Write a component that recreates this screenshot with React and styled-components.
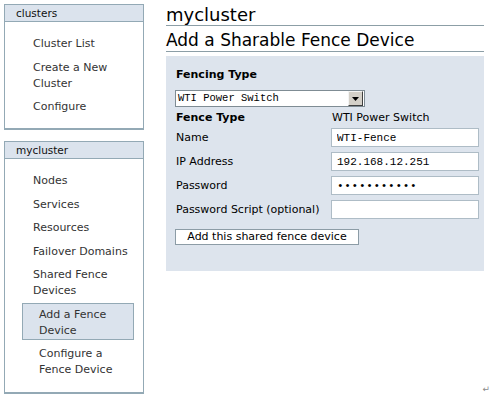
import React from "react"
import styled, { createGlobalStyle } from "styled-components"

const GlobalStyle = createGlobalStyle`
  html, body {
    margin: 0;
    padding: 0;
    background: #ffffff;
  }
  body {
    font-family: "DejaVu Sans", Verdana, sans-serif;
    font-size: 11px;
    color: #000;
  }
`

const Page = styled.div`
  display: flex;
  gap: 22px;
  padding: 4px 8px 4px 4px;
  width: 492px;
  height: 399px;
  box-sizing: border-box;
`

const Sidebar = styled.div`
  width: 140px;
  display: flex;
  flex-direction: column;
  gap: 11px;
  flex-shrink: 0;
`

const NavBox = styled.div`
  border: 1px solid #93a9b5;
  border-bottom-width: 2px;
  background: #fff;
`

const NavHeader = styled.div`
  height: 16px;
  line-height: 16px;
  padding-left: 11px;
  background: #dbe3ed;
  border-bottom: 1px solid #93a9b5;
  font-size: 10.5px;
  color: #111;
`

const NavList = styled.div`
  display: flex;
  flex-direction: column;
  gap: 7.5px;
  padding: 14px 0 13px 28px;
`

const NavItem = styled.div`
  line-height: 16px;
  color: #333;
`

const SubList = styled.div`
  display: flex;
  flex-direction: column;
  gap: 5px;
  margin: 4px 0 0 -11px;
  width: 112px;
`

const SubItem = styled.div`
  line-height: 16px;
  color: #333;
  padding: ${(p) => (p.$active ? "3px" : "0")} 0 0 16px;
  border: 1px solid ${(p) => (p.$active ? "#93a9b5" : "transparent")};
  background: ${(p) => (p.$active ? "#dbe3ed" : "transparent")};
`

const Main = styled.div`
  width: 318px;
  display: flex;
  flex-direction: column;
`

const Title = styled.h1`
  margin: 0;
  font-size: 18px;
  line-height: 21px;
  font-weight: normal;
  border-bottom: 1px solid #8c9ea6;
`

const SubTitle = styled.h2`
  margin: 4px 0 0;
  font-size: 17px;
  line-height: 21px;
  font-weight: normal;
  border-bottom: 1px solid #8c9ea6;
`

const Panel = styled.div`
  margin-top: 4px;
  background: #dde4ed;
  padding: 11px 9px 26px 9px;
`

const PanelLabel = styled.div`
  font-weight: bold;
  line-height: 16px;
  padding-left: 1px;
`

const SelectBox = styled.div`
  margin-top: 7px;
  width: 190px;
  height: 17px;
  box-sizing: border-box;
  border: 1px solid #7f8c94;
  background: #fff;
  display: flex;
  align-items: center;
`

const SelectText = styled.div`
  flex: 1;
  padding-left: 2px;
  font-family: "Liberation Mono", "DejaVu Sans Mono", monospace;
  font-size: 10.5px;
  line-height: 15px;
`

const ArrowButton = styled.div`
  width: 13px;
  height: 13px;
  margin-right: 1px;
  background: #d4d0c8;
  border: 1px solid;
  border-color: #f4f4f4 #404040 #404040 #f4f4f4;
  display: flex;
  align-items: center;
  justify-content: center;
`

const FormGrid = styled.div`
  margin-top: 3px;
  display: grid;
  grid-template-columns: 156px 148px;
  grid-template-rows: 13px;
  grid-auto-rows: 19px;
  row-gap: 5px;
  align-items: center;
`

const FieldLabel = styled.div`
  padding-left: 1px;
  line-height: 16px;
  white-space: nowrap;
  font-weight: ${(p) => (p.$bold ? "bold" : "normal")};
  align-self: ${(p) => (p.$bold ? "start" : "center")};
`

const FieldValue = styled.div`
  line-height: 16px;
  padding-left: 1px;
  align-self: start;
`

const TextInput = styled.input`
  width: 148px;
  height: 19px;
  box-sizing: border-box;
  border: 1px solid #aebcc6;
  background: #fff;
  padding: 0 0 0 5px;
  margin: 0;
  font-family: "Liberation Mono", "DejaVu Sans Mono", monospace;
  font-size: 11px;
  letter-spacing: ${(p) => (p.type === "password" ? "0.7px" : "0")};
  color: #000;
  outline: none;
`

const SubmitButton = styled.button`
  margin-top: 10px;
  width: 184px;
  height: 16px;
  box-sizing: border-box;
  border: 1px solid #8c9ca6;
  background: #fff;
  padding: 0;
  font-family: "DejaVu Sans", Verdana, sans-serif;
  font-size: 11px;
  line-height: 14px;
  color: #000;
  display: block;
`

const ReturnMark = styled.div`
  margin-top: auto;
  align-self: flex-end;
  margin-right: -6px;
  margin-bottom: 1px;
  font-size: 9px;
  line-height: 10px;
  color: #8a8a8a;
`

const clusterLinks = ["Cluster List", "Create a New Cluster", "Configure"]
const myclusterLinks = ["Nodes", "Services", "Resources", "Failover Domains"]

export default function App() {
  return (
    <>
      <GlobalStyle />
      <Page>
        <Sidebar>
          <NavBox>
            <NavHeader>clusters</NavHeader>
            <NavList>
              {clusterLinks.map((l) => (
                <NavItem key={l}>{l === "Create a New Cluster" ? <>Create a New<br />Cluster</> : l}</NavItem>
              ))}
            </NavList>
          </NavBox>
          <NavBox>
            <NavHeader>mycluster</NavHeader>
            <NavList>
              {myclusterLinks.map((l) => (
                <NavItem key={l}>{l}</NavItem>
              ))}
              <NavItem>
                Shared Fence<br />Devices
                <SubList>
                  <SubItem $active>Add a Fence<br />Device</SubItem>
                  <SubItem>Configure a<br />Fence Device</SubItem>
                </SubList>
              </NavItem>
            </NavList>
          </NavBox>
        </Sidebar>
        <Main>
          <Title>mycluster</Title>
          <SubTitle>Add a Sharable Fence Device</SubTitle>
          <Panel>
            <PanelLabel>Fencing Type</PanelLabel>
            <SelectBox>
              <SelectText>WTI Power Switch</SelectText>
              <ArrowButton>
                <svg width="7" height="4" viewBox="0 0 7 4">
                  <path d="M0 0H7L3.5 4Z" fill="#000" />
                </svg>
              </ArrowButton>
            </SelectBox>
            <FormGrid>
              <FieldLabel $bold>Fence Type</FieldLabel>
              <FieldValue>WTI Power Switch</FieldValue>
              <FieldLabel>Name</FieldLabel>
              <TextInput defaultValue="WTI-Fence" />
              <FieldLabel>IP Address</FieldLabel>
              <TextInput defaultValue="192.168.12.251" />
              <FieldLabel>Password</FieldLabel>
              <TextInput type="password" defaultValue="12345678901" />
              <FieldLabel>Password Script (optional)</FieldLabel>
              <TextInput defaultValue="" />
            </FormGrid>
            <SubmitButton>Add this shared fence device</SubmitButton>
          </Panel>
          <ReturnMark>↵</ReturnMark>
        </Main>
      </Page>
    </>
  )
}
